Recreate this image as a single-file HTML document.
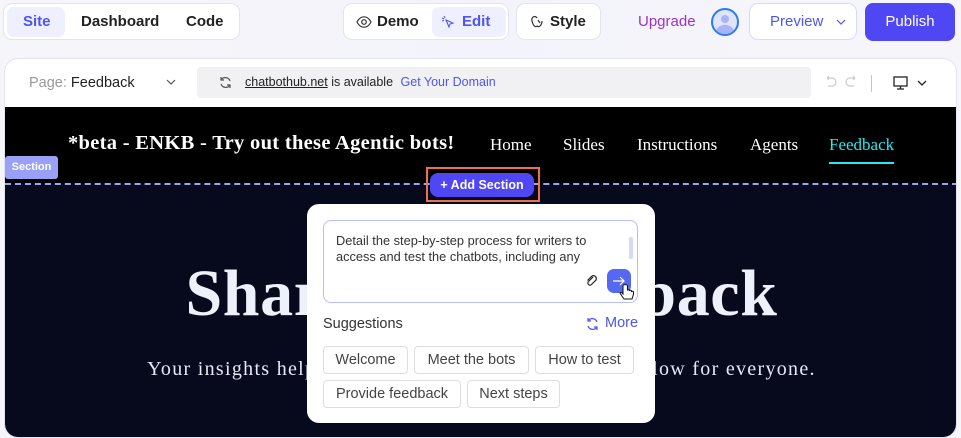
<!DOCTYPE html>
<html><head><meta charset="utf-8"><style>
*{box-sizing:border-box;margin:0;padding:0}
body{width:961px;height:427px;overflow:hidden;background:linear-gradient(90deg,#f6f6fa,#f3f3fb 50%,#f6f6fa);font-family:"Liberation Sans",sans-serif;position:relative;color:#1a1a2a}
.abs{position:absolute}
.grp{position:absolute;background:#fff;border:1px solid #e2e4ee;border-radius:9px;height:37px;top:3px}
.t{position:absolute;top:0;line-height:35px;font-size:15px;font-weight:600;color:#222}
.hl{position:absolute;top:3px;height:30px;border-radius:7px;background:#eef0ff}
.serif{font-family:"Liberation Serif",serif}
.chip{position:absolute;height:28px;border:1px solid #dcdde6;border-radius:4px;line-height:26px;font-size:14.5px;color:#444;text-align:center}
</style></head><body>
<div class="grp" style="left:3px;width:237px">
 <div class="hl" style="left:3px;width:58px"></div>
 <div class="t" style="left:19px;color:#4e55f0">Site</div>
 <div class="t" style="left:77px">Dashboard</div>
 <div class="t" style="left:182px">Code</div>
</div>
<div class="grp" style="left:343px;width:166px">
 <svg class="abs" style="left:12px;top:11px" width="16" height="14" viewBox="0 0 16 14"><path d="M1 7C3 3 5.5 1.8 8 1.8S13 3 15 7C13 11 10.5 12.2 8 12.2S3 11 1 7Z" fill="none" stroke="#333" stroke-width="1.2"/><circle cx="8" cy="7" r="2.3" fill="none" stroke="#333" stroke-width="1.2"/></svg>
 <div class="t" style="left:33px">Demo</div>
 <div class="hl" style="left:88px;width:74px"></div>
 <svg class="abs" style="left:97px;top:11px" width="14" height="14" viewBox="0 0 14 14"><path d="M5 5L12 8L9 9L8 12Z" fill="none" stroke="#4e55f0" stroke-width="1.1"/><path d="M1 3L3 4M3 1L4 3M1 6L3 5.5" stroke="#4e55f0" stroke-width="1"/></svg>
 <div class="t" style="left:118px;color:#4e55f0">Edit</div>
</div>
<div class="grp" style="left:516px;width:85px">
 <svg class="abs" style="left:13px;top:11px" width="14" height="14" viewBox="0 0 14 14"><path d="M7 3C5 0 1 2 2 6C3 10 5 13 7 11C9 13 12 10 12 6" fill="none" stroke="#333" stroke-width="1.2"/><path d="M8 5L10 8" stroke="#333" stroke-width="1.2"/></svg>
 <div class="t" style="left:33px">Style</div>
</div>
<div class="abs" style="left:638px;top:13px;font-size:15px;color:#a030c8">Upgrade</div>
<div class="abs" style="left:711px;top:8px;width:28px;height:28px;border-radius:50%;border:2px solid #2a7cf0;background:#dfe3fb;overflow:hidden">
 <div class="abs" style="left:8px;top:5px;width:8px;height:8px;border-radius:50%;background:#aab3f5"></div>
 <div class="abs" style="left:3px;top:15px;width:18px;height:14px;border-radius:50%;background:#aab3f5"></div>
</div>
<div class="grp" style="left:749px;width:108px;border-color:#d6daf8">
 <div class="t" style="left:20px;font-weight:400;color:#4e55f0">Preview</div>
 <svg class="abs" style="left:86px;top:15px" width="10" height="7"><path d="M1 1L5 5L9 1" fill="none" stroke="#4e55f0" stroke-width="1.2"/></svg>
</div>
<div class="abs" style="left:865px;top:3px;width:90px;height:38px;border-radius:8px;background:#5047f4;color:#fff;font-size:15px;line-height:38px;text-align:center">Publish</div>

<div class="abs" style="left:4px;top:58px;width:953px;height:380px;background:#fff;border:1px solid #e2e4ee;border-radius:14px;overflow:hidden">
 <div class="abs" style="left:24px;top:16px;font-size:14.5px;color:#999">Page: <span style="color:#222">Feedback</span></div>
 <svg class="abs" style="left:161px;top:20px" width="10" height="7"><path d="M1 1L5 5L9 1" fill="none" stroke="#555" stroke-width="1.2"/></svg>
 <div class="abs" style="left:192px;top:8px;width:614px;height:31px;background:#f1f1f3;border-radius:4px"></div>
 <svg class="abs" style="left:214px;top:17px" width="13" height="13" viewBox="0 0 13 13"><path d="M11 5A5 5 0 0 0 2 4M2 8A5 5 0 0 0 11 9" fill="none" stroke="#555" stroke-width="1.2"/><path d="M2 1V4H5M11 12V9H8" fill="none" stroke="#555" stroke-width="1.2"/></svg>
 <div class="abs" style="left:240px;top:16px;font-size:12.5px;color:#222"><u>chatbothub.net</u> is available <span style="color:#4e55f0;margin-left:4px">Get Your Domain</span></div>
 <svg class="abs" style="left:818px;top:16px" width="36" height="14" viewBox="0 0 36 14"><path d="M4 3H9A4 4 0 0 1 9 11H5M4 3L6 1M4 3L6 5" fill="none" stroke="#ccc" stroke-width="1.2"/><path d="M32 3H27A4 4 0 0 0 27 11H31M32 3L30 1M32 3L30 5" fill="none" stroke="#ccc" stroke-width="1.2"/></svg>
 <div class="abs" style="left:866px;top:16px;width:1px;height:17px;background:#b9c0f5"></div>
 <svg class="abs" style="left:888px;top:17px" width="16" height="14"><rect x="1" y="1" width="13" height="9" fill="none" stroke="#222" stroke-width="1.3"/><path d="M7.5 10V13M4 13H11" stroke="#222" stroke-width="1.3"/></svg>
 <svg class="abs" style="left:912px;top:21px" width="10" height="7"><path d="M1 1L5 5L9 1" fill="none" stroke="#222" stroke-width="1.3"/></svg>

 <div class="abs" style="left:0;top:48px;width:953px;height:77px;background:#000"></div>
 <div class="abs" style="left:0;top:125px;width:953px;height:260px;background:#070a1c"></div>
 <div class="abs serif" style="left:63px;top:73px;font-size:20.5px;font-weight:bold;color:#fff;letter-spacing:0.3px">*beta - ENKB - Try out these Agentic bots!</div>
 <div class="abs serif" style="top:76px;left:485px;font-size:17px;color:#fff">Home</div>
 <div class="abs serif" style="top:76px;left:558px;font-size:17px;color:#fff">Slides</div>
 <div class="abs serif" style="top:76px;left:632px;font-size:17px;color:#fff">Instructions</div>
 <div class="abs serif" style="top:76px;left:745px;font-size:17px;color:#fff">Agents</div>
 <div class="abs serif" style="top:76px;left:824px;font-size:17px;color:#28e6f2">Feedback</div>
 <div class="abs" style="left:824px;top:103px;width:65px;height:2px;background:#28e6f2"></div>
 <div class="abs" style="left:0;top:124px;width:953px;border-top:2px dashed #9aa3f5"></div>
 <div class="abs" style="left:0;top:97px;width:53px;height:23px;background:#9aa0f8;border-radius:3px;color:#fff;font-size:11px;font-weight:bold;line-height:23px;text-align:center">Section</div>
 <div class="abs" style="left:421px;top:108px;width:114px;height:35px;border:2px solid #f0704e"></div>
 <div class="abs" style="left:425px;top:114px;width:104px;height:24px;background:#5047f4;border-radius:8px;color:#fff;font-size:12.5px;font-weight:bold;line-height:24px;text-align:center">+ Add Section</div>
 <div class="abs serif" style="left:0;width:953px;top:197px;text-align:center;font-size:66px;font-weight:bold;color:#eef0fb;letter-spacing:0.6px">Share your feedback</div>
 <div class="abs serif" style="left:0;width:953px;top:299px;text-align:center;font-size:20px;color:#e6e8f4;letter-spacing:1.3px">Your insights help us make this a more efficient workflow for everyone.</div>

 <div class="abs" style="left:302px;top:145px;width:348px;height:219px;background:#fff;border-radius:12px">
  <div class="abs" style="left:16px;top:16px;width:315px;height:83px;border:1px solid #b6bff6;border-radius:8px"></div>
  <div class="abs" style="left:29px;top:29px;width:290px;font-size:12.8px;line-height:16px;color:#333">Detail the step-by-step process for writers to access and test the chatbots, including any</div>
  <div class="abs" style="left:322px;top:33px;width:4px;height:22px;background:#d4d8fa;border-radius:2px"></div>
  <svg class="abs" style="left:278px;top:70px" width="14" height="14" viewBox="0 0 14 14"><path d="M8 3L3.5 7.5A2 2 0 0 0 6.5 10.5L11 6A3 3 0 0 0 7 2L2.5 6.5" fill="none" stroke="#222" stroke-width="1.2"/></svg>
  <div class="abs" style="left:300px;top:65px;width:24px;height:24px;background:#5469f0;border-radius:7px"></div>
  <svg class="abs" style="left:305px;top:71px" width="14" height="12"><path d="M1 6H12M8 2L12 6L8 10" fill="none" stroke="#fff" stroke-width="1.2"/></svg>
  <svg class="abs" style="left:312px;top:80px" width="16" height="18" viewBox="0 0 16 18"><path d="M4 1.5V10L2.5 8.5C1.5 8 0.5 9 1.5 10L5 15H13L14.5 10V8C14.5 7 12.5 7 12.5 8V7C12.5 6 10.5 6 10.5 7V6.5C10.5 5.5 8.5 5.5 8.5 6.5V1.5C8.5 0.3 4 0.3 4 1.5Z" fill="#fff" stroke="#111" stroke-width="1"/></svg>
  <div class="abs" style="left:16px;top:112px;font-size:14.5px;color:#333">Suggestions</div>
  <svg class="abs" style="left:278px;top:113px" width="15" height="14" viewBox="0 0 15 14"><path d="M12 5A5 5 0 0 0 3 4M3 9A5 5 0 0 0 12 10" fill="none" stroke="#4e55f0" stroke-width="1.2"/><path d="M3 1V4H6M12 13V10H9" fill="none" stroke="#4e55f0" stroke-width="1.2"/></svg>
  <div class="abs" style="left:298px;top:111px;font-size:14.5px;color:#4e55f0">More</div>
  <div class="chip" style="left:16px;top:142px;width:85px">Welcome</div>
  <div class="chip" style="left:107px;top:142px;width:115px">Meet the bots</div>
  <div class="chip" style="left:228px;top:142px;width:99px">How to test</div>
  <div class="chip" style="left:16px;top:176px;width:138px">Provide feedback</div>
  <div class="chip" style="left:160px;top:176px;width:93px">Next steps</div>
 </div>
</div>
</body></html>
